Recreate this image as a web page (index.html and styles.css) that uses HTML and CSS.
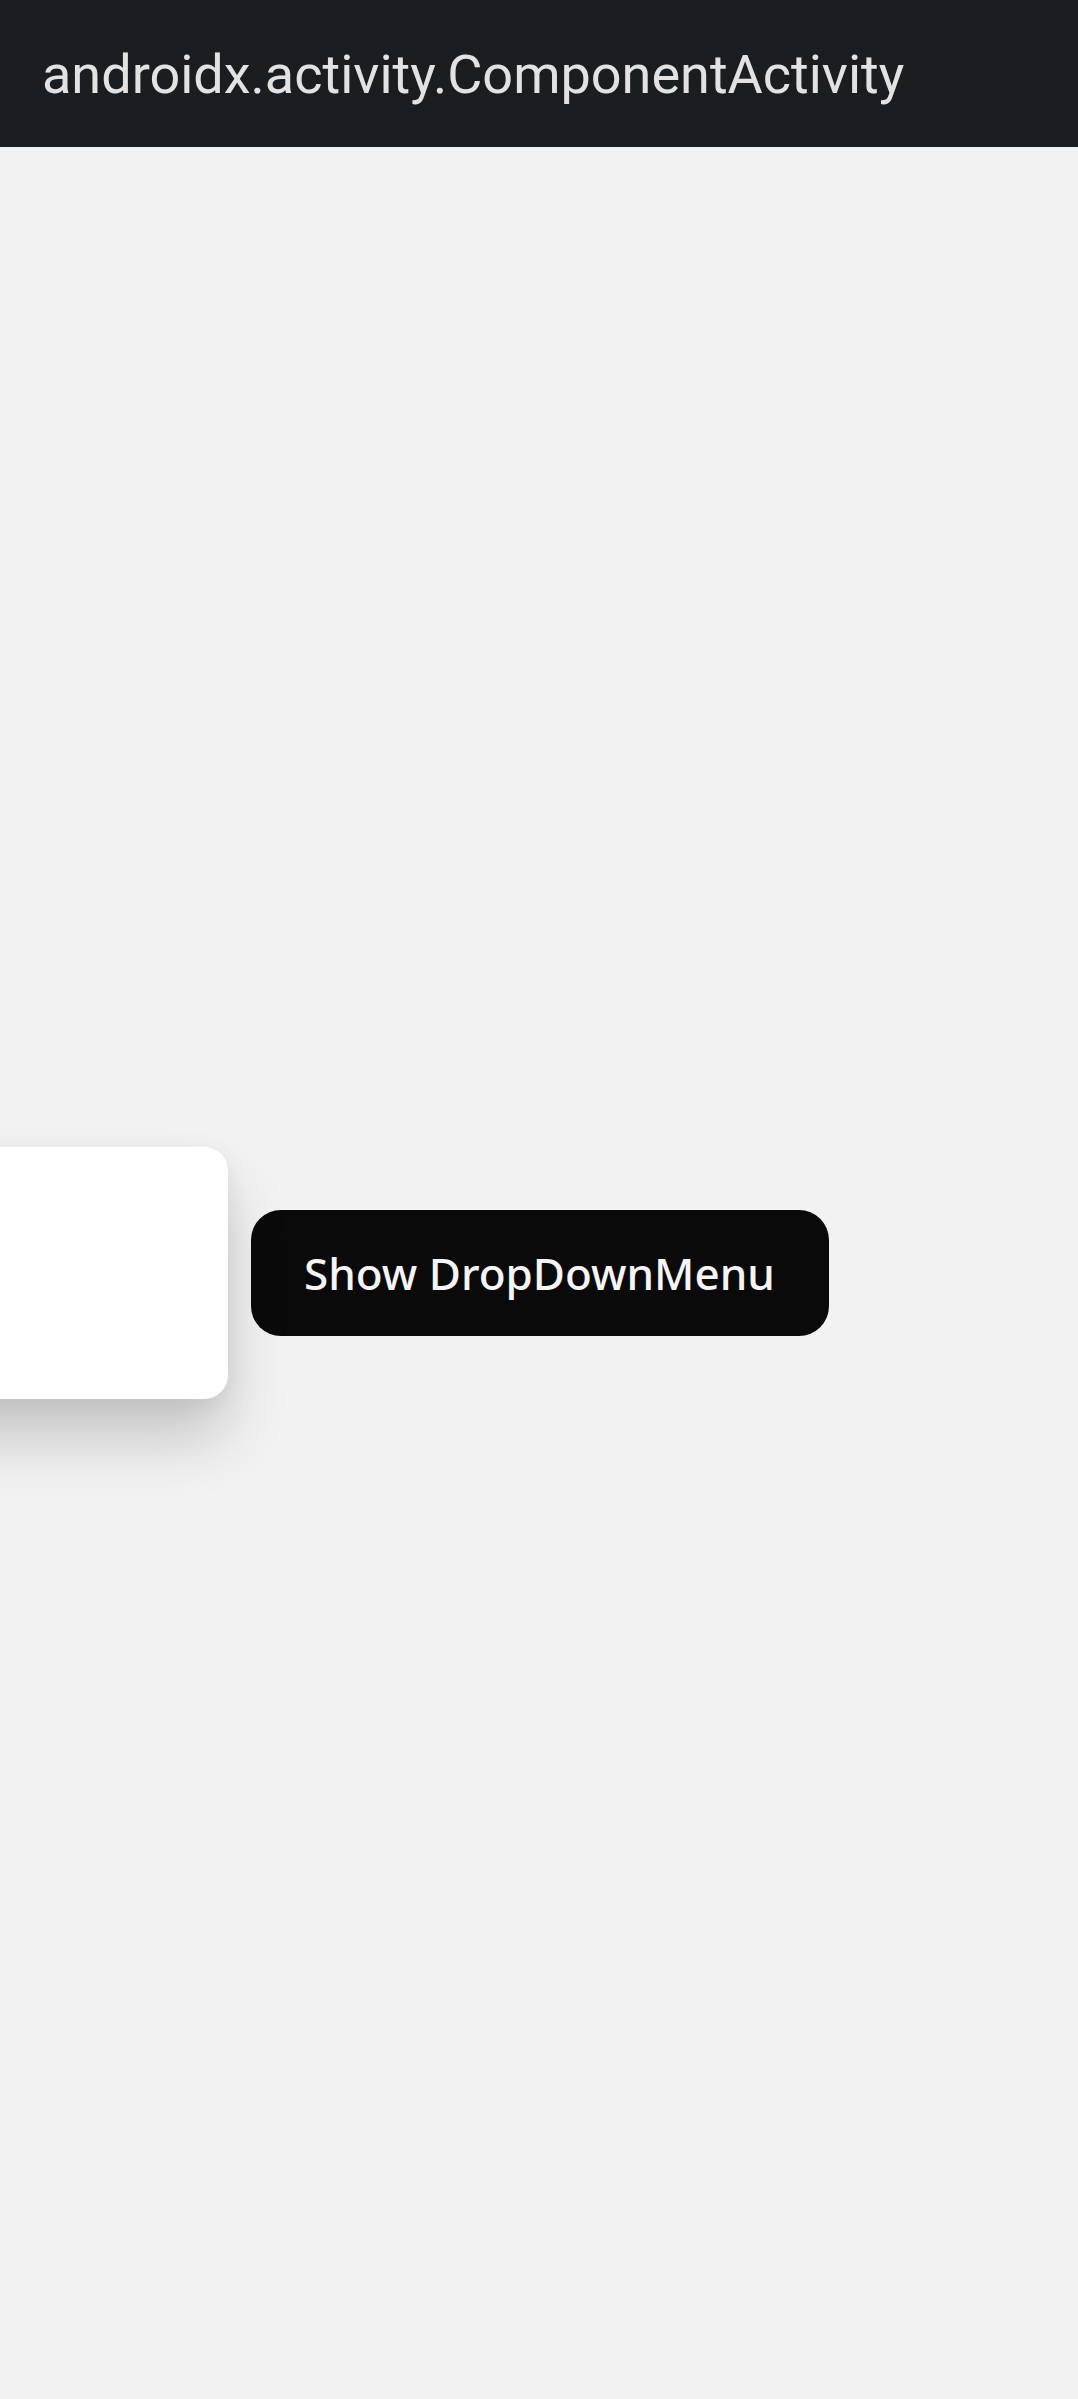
FILE: index.html
```html
<!DOCTYPE html>
<html>
<head>
<meta charset="utf-8">
<link rel="stylesheet" href="styles.css">
</head>
<body>
<header class="topbar"><h1 class="title">androidx.activity.ComponentActivity</h1></header>
<main class="content">
  <div class="menu-popup"></div>
  <button class="show-btn">Show DropDownMenu</button>
</main>
</body>
</html>
```
FILE: styles.css
```css
html, body { margin: 0; padding: 0; }
body {
  width: 1078px;
  height: 2399px;
  background: #f2f2f2;
  overflow: hidden;
  font-family: Roboto, "Liberation Sans", sans-serif;
}
.topbar {
  height: 147px;
  background: #1b1e21;
  display: flex;
  align-items: center;
  padding-left: 42px;
  box-sizing: border-box;
}
.title {
  margin: 0;
  font-family: Roboto, sans-serif;
  font-weight: 400;
  font-size: 54px;
  color: #e2e2e2;
  line-height: 1;
  padding-top: 2px;
}
.content {
  position: relative;
  height: 2252px;
  display: flex;
  align-items: center;
  justify-content: center;
}
.menu-popup {
  position: absolute;
  left: -100px;
  top: 1000px;
  width: 328px;
  height: 252px;
  background: #ffffff;
  border-radius: 24px;
  box-shadow: 0 40px 60px rgba(0,0,0,0.18), 0 6px 24px rgba(0,0,0,0.06);
}
.show-btn {
  width: 578px;
  height: 126px;
  margin-left: 1px;
  background: #0a0a0a;
  color: #f5f5f5;
  border: none;
  border-radius: 30px;
  font-family: "Noto Sans", "Open Sans", sans-serif;
  font-weight: 500;
  font-size: 44px;
  padding: 0;
}
```
